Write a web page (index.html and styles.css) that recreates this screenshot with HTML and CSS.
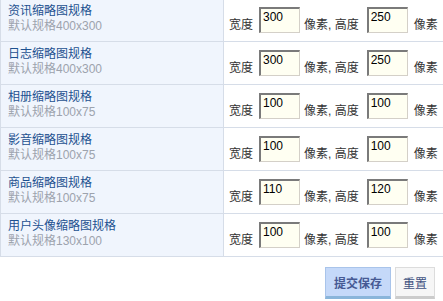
FILE: index.html
```html
<!DOCTYPE html>
<html lang="zh-CN">
<head>
<meta charset="utf-8">
<title>缩略图规格设置</title>
<link rel="stylesheet" href="styles.css">
</head>
<body>
<form class="settings">
  <table class="spec-table">
    <tr>
      <th class="spec-name"><div class="title">资讯缩略图规格</div><div class="hint">默认规格400x300</div></th>
      <td class="spec-value"><div class="fields"><span class="lbl">宽度</span><input class="num" value="300"><span class="lbl mid">像素, 高度</span><input class="num" value="250"><span class="lbl end">像素</span></div></td>
    </tr>
    <tr>
      <th class="spec-name"><div class="title">日志缩略图规格</div><div class="hint">默认规格400x300</div></th>
      <td class="spec-value"><div class="fields"><span class="lbl">宽度</span><input class="num" value="300"><span class="lbl mid">像素, 高度</span><input class="num" value="250"><span class="lbl end">像素</span></div></td>
    </tr>
    <tr>
      <th class="spec-name"><div class="title">相册缩略图规格</div><div class="hint">默认规格100x75</div></th>
      <td class="spec-value"><div class="fields"><span class="lbl">宽度</span><input class="num" value="100"><span class="lbl mid">像素, 高度</span><input class="num" value="100"><span class="lbl end">像素</span></div></td>
    </tr>
    <tr>
      <th class="spec-name"><div class="title">影音缩略图规格</div><div class="hint">默认规格100x75</div></th>
      <td class="spec-value"><div class="fields"><span class="lbl">宽度</span><input class="num" value="100"><span class="lbl mid">像素, 高度</span><input class="num" value="100"><span class="lbl end">像素</span></div></td>
    </tr>
    <tr>
      <th class="spec-name"><div class="title">商品缩略图规格</div><div class="hint">默认规格100x75</div></th>
      <td class="spec-value"><div class="fields"><span class="lbl">宽度</span><input class="num" value="110"><span class="lbl mid">像素, 高度</span><input class="num" value="120"><span class="lbl end">像素</span></div></td>
    </tr>
    <tr>
      <th class="spec-name"><div class="title">用户头像缩略图规格</div><div class="hint">默认规格130x100</div></th>
      <td class="spec-value"><div class="fields"><span class="lbl">宽度</span><input class="num" value="100"><span class="lbl mid">像素, 高度</span><input class="num" value="100"><span class="lbl end">像素</span></div></td>
    </tr>
  </table>
  <div class="actions">
    <button type="button" class="btn btn-primary">提交保存</button>
    <button type="reset" class="btn btn-plain">重置</button>
  </div>
</form>
</body>
</html>
```
FILE: styles.css
```css
html, body {
  margin: 0;
  padding: 0;
  background: #ffffff;
}
body {
  font-family: "Liberation Sans", "Noto Sans CJK SC", sans-serif;
  font-size: 12px;
  color: #333333;
  overflow: hidden;
}
.settings {
  margin: -2px 0 0 0;
}
.spec-table {
  border-collapse: collapse;
  width: 460px;
  margin-left: 0;
}
.spec-table th,
.spec-table td {
  border: 1px solid #d6dde8;
  height: 43px;
  box-sizing: border-box;
  padding: 0;
}
.spec-name {
  width: 223px;
  background: #f0f5fd;
  text-align: left;
  font-weight: normal;
  vertical-align: top;
  padding: 5px 7px 0 7px !important;
  line-height: 15px;
}
.title {
  color: #1d5190;
}
.hint {
  color: #9da3ad;
}
.spec-value {
  vertical-align: middle;
  padding-left: 5px !important;
}
.fields {
  display: flex;
  align-items: flex-end;
}
.lbl {
  line-height: 14px;
  margin-bottom: 1px;
  color: #333;
  white-space: nowrap;
}
.num {
  box-sizing: border-box;
  width: 41px;
  height: 26px;
  margin: 0 0 0 6px;
  padding: 0 2px 8px 2px;
  line-height: 14px;
  font-family: "Liberation Sans", sans-serif;
  font-size: 12px;
  color: #000;
  background: #fffff2;
  border-style: solid;
  border-width: 2px 1px 1px 2px;
  border-color: #7a7a7a #d4d0c8 #d4d0c8 #7a7a7a;
  outline: none;
}
.lbl.mid {
  margin-left: 4px;
  margin-right: 2px;
}
.lbl.end {
  margin-left: 6px;
}
.actions {
  display: flex;
  justify-content: flex-end;
  gap: 4px;
  margin-top: 10px;
  padding-right: 8px;
}
.btn {
  box-sizing: border-box;
  height: 32px;
  font-family: "Noto Sans CJK SC", sans-serif;
  font-size: 12px;
  padding: 0;
  cursor: pointer;
  border-style: solid;
  border-width: 1px 1px 3px 1px;
}
.btn-primary {
  width: 66px;
  background: #c5d9f9;
  border-color: #a9c4ea #a9c4ea #8ab5da #a9c4ea;
  color: #465a94;
  font-weight: bold;
}
.btn-plain {
  width: 40px;
  background: #f6f6f6;
  border-color: #dcdcdc #dcdcdc #cccccc #dcdcdc;
  color: #3f5281;
}
```
